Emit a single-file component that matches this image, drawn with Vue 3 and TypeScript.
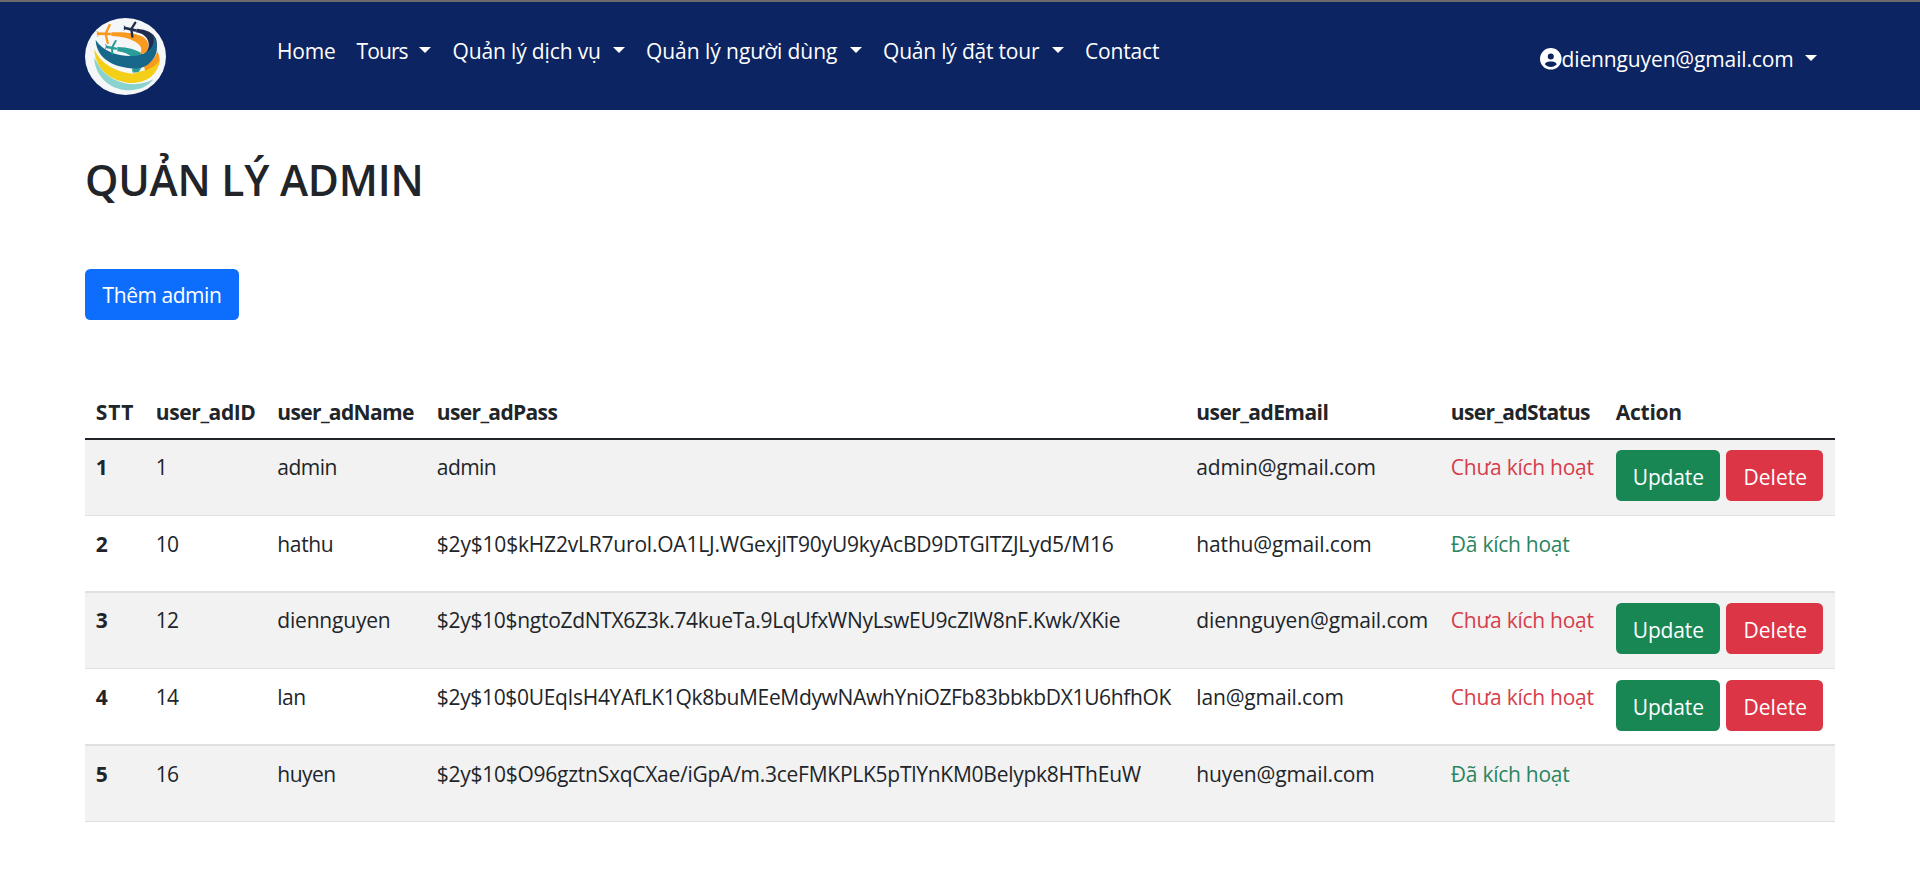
<script setup lang="ts">
interface NavItem {
  key: string
  label: string
  menu: boolean
}

interface Admin {
  id: number
  name: string
  pass: string
  email: string
  active: boolean
}

const navItems: NavItem[] = [
  { key: 'home', label: 'Home', menu: false },
  { key: 'tours', label: 'Tours', menu: true },
  { key: 'services', label: 'Quản lý dịch vụ', menu: true },
  { key: 'users', label: 'Quản lý người dùng', menu: true },
  { key: 'bookings', label: 'Quản lý đặt tour', menu: true },
  { key: 'contact', label: 'Contact', menu: false },
]

const columns: string[] = [
  'STT',
  'user_adID',
  'user_adName',
  'user_adPass',
  'user_adEmail',
  'user_adStatus',
  'Action',
]

const admins: Admin[] = [
  { id: 1, name: 'admin', pass: 'admin', email: 'admin@gmail.com', active: false },
  { id: 10, name: 'hathu', pass: '$2y$10$kHZ2vLR7urol.OA1LJ.WGexjlT90yU9kyAcBD9DTGlTZJLyd5/M16', email: 'hathu@gmail.com', active: true },
  { id: 12, name: 'diennguyen', pass: '$2y$10$ngtoZdNTX6Z3k.74kueTa.9LqUfxWNyLswEU9cZlW8nF.Kwk/XKie', email: 'diennguyen@gmail.com', active: false },
  { id: 14, name: 'lan', pass: '$2y$10$0UEqIsH4YAfLK1Qk8buMEeMdywNAwhYniOZFb83bbkbDX1U6hfhOK', email: 'lan@gmail.com', active: false },
  { id: 16, name: 'huyen', pass: '$2y$10$O96gztnSxqCXae/iGpA/m.3ceFMKPLK5pTlYnKM0Belypk8HThEuW', email: 'huyen@gmail.com', active: true },
]
</script>

<template>
  <div class="page">
    <header class="navbar">
      <a class="brand">
        <svg class="logo" viewBox="45 54 243 231" preserveAspectRatio="none">
          <ellipse cx="166.5" cy="169.5" rx="121.5" ry="115.5" fill="#f5f6f8" />
          <path d="M73 172C73 218 108 264 164 270C204 274 234 260 250 238C226 250 204 254 178 252C132 246 94 222 73 172Z" fill="#8ad2cd" />
          <path d="M262 154C274 178 270 198 254 212L226 218L222 198C244 188 256 174 262 154Z" fill="#f79a1e" />
          <path d="M73 148C74 198 112 240 172 248C222 254 266 226 267 182C256 200 236 210 212 214L188 221C136 216 92 192 73 148Z" fill="#f3cf17" />
          <path d="M186 206L216 200L206 216L188 218Z" fill="#2a9d98" />
          <path d="M142 141C174 141 202 150 222 164L186 172C176 162 162 156 142 154Z" fill="#2a9d98" />
          <path d="M124 97C162 95 200 99 220 111C238 124 240 142 228 158L210 162C218 148 214 136 196 125C176 114 150 109 124 108Z" fill="#f79a1e" />
          <path d="M200 86C230 88 250 98 258 116C264 136 258 156 244 170L226 160C238 146 240 130 230 114C222 104 212 99 198 97Z" fill="#1f2c4f" />
          <path d="M77 120C98 152 138 168 182 168C212 168 236 156 246 140C252 128 252 118 250 106C268 136 264 168 238 190C230 198 216 206 192 206C130 202 80 176 77 120Z" fill="#17678a" />
          <g stroke="#f79a1e" stroke-linecap="round" fill="none">
            <path d="M84 101L120 102" stroke-width="8" />
            <path d="M119 75L107 101L113 129" stroke-width="7" />
            <path d="M81 94L87 101L83 109" stroke-width="3" />
          </g>
          <g stroke="#1f2c4f" stroke-linecap="round" fill="none">
            <path d="M165 84L196 91" stroke-width="8" />
            <path d="M196 68L184 87L187 110" stroke-width="7" />
            <path d="M163 78L167 85L162 90" stroke-width="3" />
          </g>
          <g stroke="#2a9d98" stroke-linecap="round" fill="none">
            <path d="M110 141L138 146" stroke-width="7" />
            <path d="M137 123L126 143L127 161" stroke-width="6" />
            <path d="M107 134L112 141L106 145" stroke-width="3" />
          </g>
        </svg>
      </a>
      <nav class="menu">
        <a v-for="item in navItems" :key="item.key" class="link" :class="item.key">
          <span class="label">{{ item.label }}</span>
          <span v-if="item.menu" class="caret"></span>
        </a>
      </nav>
      <a class="account">
        <svg class="avatar" viewBox="0 0 512 512">
          <path fill="#fff" d="M399 384.2C376.9 345.8 335.4 320 288 320H224c-47.4 0-88.9 25.8-111 64.2c35.2 39.2 86.2 63.8 143 63.8s107.8-24.7 143-63.8zM0 256a256 256 0 1 1 512 0A256 256 0 1 1 0 256zm256 16a72 72 0 1 0 0-144 72 72 0 1 0 0 144z" />
        </svg>
        <span class="address">diennguyen@gmail.com</span>
        <span class="caret"></span>
      </a>
    </header>

    <main class="content">
      <h2 class="title">QUẢN LÝ ADMIN</h2>
      <button class="btn add" type="button">Thêm admin</button>

      <table class="table">
        <colgroup>
          <col v-for="(c, i) in columns" :key="c" :class="'col-' + i" />
        </colgroup>
        <thead>
          <tr>
            <th v-for="c in columns" :key="c">{{ c }}</th>
          </tr>
        </thead>
        <tbody>
          <tr v-for="(a, i) in admins" :key="a.id">
            <th>{{ i + 1 }}</th>
            <td class="id">{{ a.id }}</td>
            <td class="name">{{ a.name }}</td>
            <td class="pass">{{ a.pass }}</td>
            <td class="email">{{ a.email }}</td>
            <td class="status" :class="a.active ? 'on' : 'off'">{{ a.active ? 'Đã kích hoạt' : 'Chưa kích hoạt' }}</td>
            <td class="actions">
              <div v-if="!a.active" class="buttons">
                <button class="btn update" type="button">Update</button>
                <button class="btn delete" type="button">Delete</button>
              </div>
            </td>
          </tr>
        </tbody>
      </table>
    </main>
  </div>
</template>

<style>
body {
  background: #fff;
  overflow: hidden;
}
</style>

<style scoped>
.page {
  box-sizing: border-box;
  height: 876px;
  border-top: 2px solid #6b6b6b;
  font: 400 21px/32.4px "Open Sans", "Noto Sans", sans-serif;
  color: #212529;
}

.navbar {
  display: flex;
  align-items: flex-start;
  box-sizing: border-box;
  height: 108px;
  padding: 16px 103px 0 85px;
  background: #0c2461;
  color: #fff;
}

.brand {
  width: 192px;
}

.logo {
  display: block;
  width: 81px;
  height: 77px;
}

.menu {
  display: grid;
  grid-template-columns: 58px 74.5px 172px 215.5px 180.5px 80px;
  column-gap: 21.5px;
  margin-top: 17px;
}

.link {
  display: flex;
  justify-content: space-between;
  white-space: nowrap;
}

.caret {
  width: 0;
  height: 0;
  margin-top: 12px;
  border: 6.5px solid transparent;
  border-top-color: #fff;
  border-bottom: 0;
}

.home { letter-spacing: -0.15px; }
.tours { letter-spacing: -0.9px; }
.services { letter-spacing: -0.14px; }
.users { letter-spacing: -0.05px; }
.bookings { letter-spacing: -0.2px; }
.contact { letter-spacing: -0.16px; }

.account {
  display: flex;
  align-items: flex-start;
  width: 277px;
  margin: 25px 0 0 auto;
}

.avatar {
  width: 21.6px;
  height: 21.6px;
  margin-top: 5px;
}

.address {
  flex: 1;
  letter-spacing: -0.14px;
}

.content {
  padding: 0 85px;
}

.title {
  margin: 0;
  padding-top: 44px;
  font-size: 42.5px;
  font-weight: 600;
  letter-spacing: -0.22px;
  line-height: 52px;
}

.btn {
  display: inline-block;
  height: 51px;
  padding: 2px 0 0;
  border: 0;
  border-radius: 5.4px;
  color: #fff;
  font: inherit;
  text-align: center;
}

.add {
  display: block;
  width: 154px;
  margin-top: 63px;
  background: #0d6efd;
  letter-spacing: -0.45px;
}

.table {
  width: 1750px;
  margin-top: 64px;
  border-collapse: separate;
  border-spacing: 0;
  table-layout: fixed;
}

.col-0 { width: 60px; }
.col-1 { width: 121.5px; }
.col-2 { width: 159.5px; }
.col-3 { width: 759.5px; }
.col-4 { width: 254.5px; }
.col-5 { width: 165px; }
.col-6 { width: 230px; }

th,
td {
  box-sizing: border-box;
  padding: 10.8px 0 0 10.8px;
  text-align: left;
  vertical-align: top;
  white-space: nowrap;
}

thead th {
  height: 56px;
  padding-top: 12px;
  border-bottom: 2px solid #212529;
  letter-spacing: -0.65px;
}

thead th:nth-child(1) { letter-spacing: 0.9px; }
thead th:nth-child(2) { letter-spacing: -0.4px; }
thead th:nth-child(5) { letter-spacing: -0.56px; }
thead th:nth-child(7) { letter-spacing: -0.26px; }

tbody th,
tbody td {
  height: 77px;
  padding-top: 12px;
  border-bottom: 2px solid #dee0e2;
}

tbody tr:nth-child(odd) > * {
  height: 76px;
  padding-top: 11px;
  border-bottom-width: 1px;
  background: #f2f2f2;
}

tbody tr:nth-child(5) > * {
  padding-top: 12px;
}

.id { letter-spacing: -0.7px; }
.name { letter-spacing: -0.53px; }
tr:nth-child(3) .name { letter-spacing: -0.2px; }
tr:nth-child(2) .name { letter-spacing: -0.35px; }

tr:nth-child(1) .pass { letter-spacing: -0.56px; }
tr:nth-child(2) .pass { letter-spacing: -0.2px; }
tr:nth-child(3) .pass { letter-spacing: -0.3px; }
tr:nth-child(4) .pass { letter-spacing: -0.33px; }
tr:nth-child(5) .pass { letter-spacing: -0.26px; }

.email { letter-spacing: -0.15px; }

.status { letter-spacing: -0.26px; }
.on { color: #2a8560; }
.off { color: #d63d4b; }

tbody tr > td.actions {
  padding-top: 10px;
}

tbody tr:nth-child(even) > td.actions {
  padding-top: 11px;
}

.buttons {
  display: flex;
  gap: 6px;
}

.update {
  width: 104px;
  padding: 3px 0 0 1px;
  background: #198754;
  letter-spacing: -0.13px;
}

.delete {
  width: 97px;
  padding: 3px 0 0 2px;
  background: #dc3545;
}
</style>
